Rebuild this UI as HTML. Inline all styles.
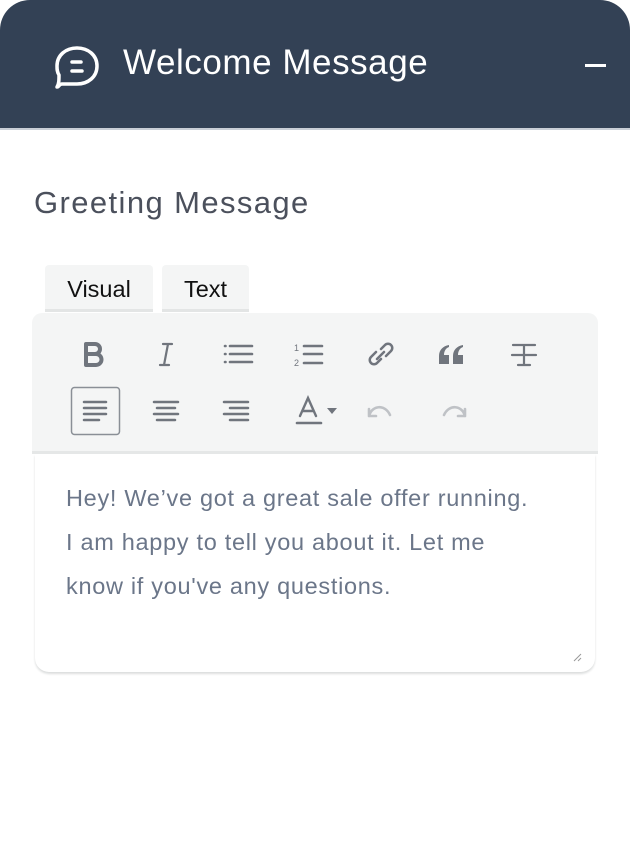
<!DOCTYPE html>
<html><head><style>
body{margin:0;width:630px;height:843px;background:#fff;font-family:"Liberation Sans",sans-serif;position:relative;overflow:hidden}
.hdr{position:absolute;left:0;top:0;width:630px;height:128px;background:#334155;border-radius:30px 30px 0 0;border-bottom:2px solid #c9ced6}
.ttl{position:absolute;left:123px;top:43px;color:#fff;font-size:35px;letter-spacing:0.55px}
.min{position:absolute;left:585px;top:64px;width:21px;height:3px;background:#fff}
.gm{position:absolute;left:34px;top:185px;font-size:31px;color:#4b505c;letter-spacing:1.4px}
.tab{position:absolute;top:265px;height:44px;background:#f4f5f5;border-bottom:3px solid #e3e5e5;border-radius:4px 4px 0 0;font-size:23.5px;color:#111;line-height:48px;text-align:center}
.tb{position:absolute;left:32px;top:313px;width:566px;height:138px;background:#f4f5f5;border-radius:10px 10px 0 0;border-bottom:3px solid #e5e7e7}
.ed{position:absolute;left:35px;top:454px;width:560px;height:218px;border-radius:0 0 14px 14px;box-shadow:0 2px 2px #dcdede}
.txt{position:absolute;left:66px;top:476px;font-size:23.5px;color:#6b7689;line-height:44px;width:540px;letter-spacing:0.7px}
svg.i{position:absolute}
</style></head><body>
<div class="hdr">
<svg class="i" style="left:54px;top:45px" width="46" height="44" viewBox="0 0 46 44" fill="none" stroke="#fff" stroke-width="3.5" stroke-linecap="round" stroke-linejoin="round"><path d="M23 3C34 3 43 10 43 21C43 32 34 39 23 39H8C5 39 5 42 3 42C5 39 5 35 5 30C3 27 3 24 3 21C3 10 12 3 23 3Z"/><path d="M18 17h9M18 26h10"/></svg>
<div class="ttl">Welcome Message</div>
<div class="min"></div>
</div>
<div class="gm">Greeting Message</div>
<div class="tab" style="left:45px;width:108px">Visual</div>
<div class="tab" style="left:162px;width:87px">Text</div>
<div class="tb"></div>
<svg class="i" style="left:0;top:0" width="630" height="460" fill="none" stroke="#70757d" stroke-width="2.5" stroke-linecap="round">
<path d="M86 344h9a5 5 0 0 1 0 10h-9zM86 354h10a5.5 5.5 0 0 1 0 11h-10z" stroke-width="4" stroke-linejoin="round"/>
<path d="M163 344h9M160 365h9M168 344l-4 21" stroke-width="2.2"/>
<path d="M230 346h22M230 354h22M230 362h22" stroke-width="2.6"/><path d="M225 346h.5M225 354h.5M225 362h.5" stroke-width="2.6"/>
<path d="M304 346h18M304 354h18M304 363h18" stroke-width="2.6"/>
<text x="294" y="351" font-size="9" fill="#70757d" stroke="none" font-family="Liberation Sans">1</text><text x="294" y="366" font-size="9" fill="#70757d" stroke="none" font-family="Liberation Sans">2</text>
<path d="M376 352l-5 5a4.2 4.2 0 0 0 6 6l4-4M386 356l5-5a4.2 4.2 0 0 0-6-6l-4 4M377 359l7-7"/>
<path d="M439 364h10v-9h-5c0-4 2-7 5-8v-2c-6 1-10 5-10 11zM453 364h10v-9h-5c0-4 2-7 5-8v-2c-6 1-10 5-10 11z" fill="#70757d" stroke="none"/>
<path d="M513 345h22M524 345v20M518 365h12M512 355h24" stroke-width="2.2"/>
<rect x="71.5" y="387.5" width="48" height="47" rx="3" stroke="#8a8f96" stroke-width="1.5"/>
<path d="M84 402h22M84 408h22M84 414h22M84 420h15"/>
<path d="M154 402h24M157 408h18M154 414h24M157 420h18"/>
<path d="M224 402h24M230 408h18M224 414h24M230 420h18"/>
<path d="M300 416l8-18 8 18M303 411h10" stroke-width="2.4"/><path d="M297 423h24" stroke-width="2.6"/><path d="M327 408h10l-5 6z" fill="#70757d" stroke="none"/>
<path d="M369 416c3-11 16-12 21-1M369 416v-7M369 416h7" stroke="#bfc2c6" stroke-width="2.6" stroke-linejoin="round"/>
<path d="M465 416c-3-11-16-12-21-1M465 416v-7M465 416h-7" stroke="#bfc2c6" stroke-width="2.6" stroke-linejoin="round"/>
</svg>
<div class="ed"></div>
<div class="txt">Hey! We’ve got a great sale offer running.<br>I am happy to tell you about it. Let me<br>know if you've any questions.</div>
<svg class="i" style="left:572px;top:652px" width="10" height="10" stroke="#999" stroke-width="1"><path d="M2 9L9 2M6 9L9 6"/></svg>
</body></html>
